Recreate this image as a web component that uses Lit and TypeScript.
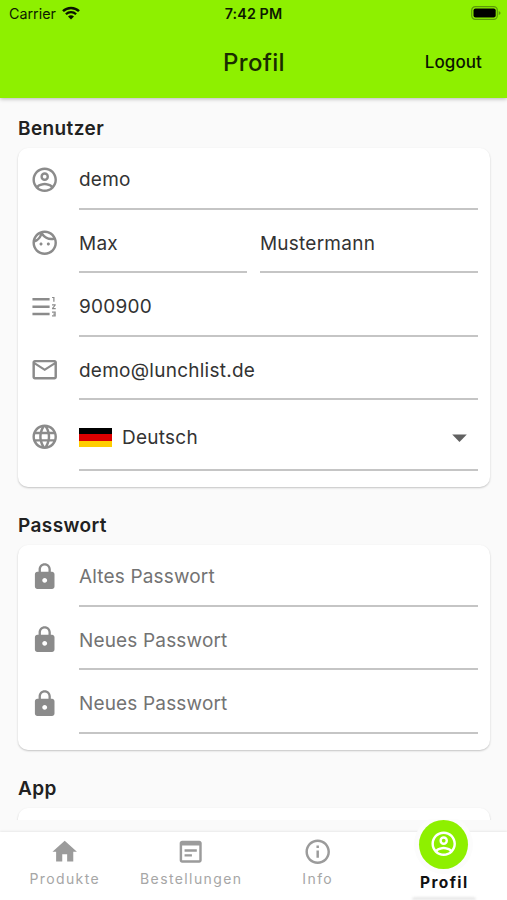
import { LitElement, html, css, svg } from "lit";
import { customElement, property } from "lit/decorators.js";

const ICONS: Record<string, string> = {
  account: "M12 2C6.48 2 2 6.48 2 12s4.48 10 10 10 10-4.48 10-10S17.52 2 12 2zM7.07 18.28c.43-.9 3.05-1.78 4.93-1.78s4.51.88 4.93 1.78C15.57 19.36 13.86 20 12 20s-3.57-.64-4.93-1.72zm11.29-1.45c-1.43-1.74-4.9-2.33-6.36-2.33s-4.93.59-6.36 2.33C4.62 15.49 4 13.82 4 12c0-4.41 3.59-8 8-8s8 3.59 8 8c0 1.82-.62 3.49-1.64 4.83zM12 6c-1.94 0-3.5 1.56-3.5 3.5S10.06 13 12 13s3.5-1.56 3.5-3.5S13.94 6 12 6zm0 5c-.83 0-1.5-.67-1.5-1.5S11.17 8 12 8s1.5.67 1.5 1.5S12.83 11 12 11z",
  face: "M10.25 13c0 .69-.56 1.25-1.25 1.25S7.75 13.69 7.75 13s.56-1.25 1.25-1.25 1.25.56 1.25 1.25zM15 11.75c-.69 0-1.25.56-1.25 1.25s.56 1.25 1.25 1.25 1.25-.56 1.25-1.25-.56-1.25-1.25-1.25zm7 .25c0 5.52-4.48 10-10 10S2 17.52 2 12 6.48 2 12 2s10 4.48 10 10zM10.66 4.12C12.06 6.44 14.6 8 17.5 8c.46 0 .91-.05 1.34-.12C17.44 5.56 14.9 4 12 4c-.46 0-.91.05-1.34.12zM4.42 9.47c1.71-.97 3.03-2.55 3.66-4.44C6.37 6 5.05 7.58 4.42 9.47zM20 12c0-.78-.12-1.53-.33-2.24-.7.15-1.42.24-2.17.24-3.13 0-5.92-1.44-7.76-3.69C8.69 8.87 6.6 10.88 4 11.86c.01.04 0 .09 0 .14 0 4.41 3.59 8 8 8s8-3.59 8-8z",
  numbers: "M18 17h2v.5h-1v1h1v.5h-2v1h3v-4h-3v1zm1-9h1V4h-2v1h1v3zm-1 3h1.8L18 13.1v.9h3v-1h-1.8l1.8-2.1V10h-3v1zM2 5h14v2H2V5zm0 14h14v-2H2v2zm0-6h14v-2H2v2z",
  mail: "M22 6c0-1.100-.9-2-2-2H4c-1.100 0-2 .9-2 2v12c0 1.100.9 2 2 2h16c1.100 0 2-.9 2-2V6zm-2 0l-8 5-8-5h16zm0 12H4V8l8 5 8-5v10z",
  globe: "M11.990 2C6.470 2 2 6.480 2 12s4.470 10 9.990 10C17.520 22 22 17.520 22 12S17.520 2 11.990 2zm6.930 6h-2.950c-.32-1.250-.78-2.450-1.380-3.560 1.840.63 3.370 1.910 4.330 3.560zM12 4.040c.83 1.200 1.480 2.530 1.910 3.960h-3.820c.43-1.430 1.080-2.760 1.910-3.960zM4.260 14C4.100 13.360 4 12.690 4 12s.1-1.360.26-2h3.380c-.08.66-.14 1.320-.14 2s.06 1.340.14 2H4.260zm.82 2h2.950c.32 1.250.78 2.450 1.380 3.560-1.840-.63-3.370-1.900-4.330-3.560zm2.950-8H5.080c.96-1.660 2.490-2.930 4.330-3.560C8.810 5.550 8.350 6.750 8.030 8zM12 19.960c-.83-1.200-1.480-2.530-1.910-3.960h3.820c-.43 1.430-1.080 2.760-1.910 3.960zM14.340 14H9.660c-.09-.66-.16-1.320-.16-2s.07-1.350.16-2h4.680c.09.65.16 1.320.16 2s-.07 1.340-.16 2zm.25 5.560c.6-1.110 1.060-2.310 1.380-3.560h2.950c-.96 1.650-2.490 2.930-4.330 3.560zM16.360 14c.08-.66.14-1.320.14-2s-.06-1.340-.14-2h3.380c.16.64.26 1.310.26 2s-.1 1.360-.26 2h-3.380z",
  lock: "M18 8h-1V6c0-2.760-2.240-5-5-5S7 3.240 7 6v2H6c-1.100 0-2 .9-2 2v10c0 1.100.9 2 2 2h12c1.100 0 2-.9 2-2V10c0-1.100-.9-2-2-2zm-6 9c-1.100 0-2-.9-2-2s.9-2 2-2 2 .9 2 2-.9 2-2 2zm3.100-9H8.900V6c0-1.710 1.390-3.100 3.100-3.100 1.710 0 3.100 1.390 3.100 3.100v2z",
  home: "M10 20v-6h4v6h5v-8h3L12 3 2 12h3v8z",
  orders: "M19 3H5c-1.110 0-2 .9-2 2v14c0 1.100.89 2 2 2h14c1.100 0 2-.9 2-2V5c0-1.100-.89-2-2-2zm0 16H5V7h14v12zm-2-7H7v-2h10v2zm-4 4H7v-2h6v2z",
  info: "M11 7h2v2h-2zm0 4h2v6h-2zm1-9C6.480 2 2 6.480 2 12s4.480 10 10 10 10-4.480 10-10S17.520 2 12 2zm0 18c-4.410 0-8-3.590-8-8s3.590-8 8-8 8 3.590 8 8-3.590 8-8 8z",
  down: "M7 10l5 5 5-5z",
};

@customElement("md-icon")
class MdIcon extends LitElement {
  @property() name = "";
  static styles = css`
    :host { display: block; width: 29.4px; height: 29.4px; flex: none; }
    svg { display: block; width: 100%; height: 100%; fill: currentColor; }
  `;
  render() {
    return html`<svg viewBox="0 0 24 24">${svg`<path d=${ICONS[this.name]}></path>`}</svg>`;
  }
}

@customElement("status-bar")
class StatusBar extends LitElement {
  static styles = css`
    :host { display: grid; grid-template-columns: 1fr auto 1fr; align-items: center; height: 27px; padding: 0 6px 0 9px; font-size: 14.3px; color: #0d1a00; }
    .left { display: flex; align-items: center; gap: 6px; letter-spacing: 0; }
    .time { font-weight: 600; letter-spacing: 0.1px; margin-right: 3px; }
    .wifi { width: 18px; height: 14px; display: block; margin-top: -2px; }
    .battery { width: 30px; height: 14px; display: block; justify-self: end; margin-top: -1px; }
  `;
  render() {
    return html`
      <div class="left">
        <span>Carrier</span>
        <svg class="wifi" viewBox="0 0 18 14">
          <path d="M1 5.200A11.500 11.500 0 0 1 17 5.200" fill="none" stroke="#0a1400" stroke-width="2.500"></path>
          <path d="M3.900 8.200A7.300 7.300 0 0 1 14.100 8.200" fill="none" stroke="#0a1400" stroke-width="2.300"></path>
          <path d="M9 13.600L6 10.600A4.300 4.300 0 0 1 12 10.600Z" fill="#0a1400"></path>
        </svg>
      </div>
      <span class="time">7:42 PM</span>
      <svg class="battery" viewBox="0 0 30 14">
        <rect x="0.700" y="0.700" width="25.600" height="12.600" rx="3.600" fill="none" stroke="#5c9a08" stroke-width="1.200"></rect>
        <rect x="2.500" y="2.500" width="22.200" height="9" rx="2" fill="#000"></rect>
        <path d="M27.700 4.900Q29.600 5.600 29.600 7T27.700 9.100Z" fill="#5c9a08"></path>
      </svg>`;
  }
}

@customElement("form-row")
class FormRow extends LitElement {
  @property() icon = "";
  @property({ type: Array }) values: string[] = [];
  @property({ type: Boolean }) hint = false;
  @property({ type: Boolean }) select = false;
  static styles = css`
    :host { display: flex; height: 63.6px; padding: 0 12.500px 0 12.300px; }
    :host([select]) { height: 70.500px; }
    md-icon { color: #8b8b8b; margin-top: 16.500px; margin-right: 19.300px; }
    :host([select]) md-icon { margin-top: 20px; }
    .fields { flex: 1; display: grid; gap: 12.400px; }
    .two { grid-template-columns: 168.500px 1fr; }
    .field { box-sizing: border-box; height: 61.500px; border-bottom: 2px solid #c5c5c5; padding-top: 4px; display: flex; align-items: center; color: #333; font-size: 19px; letter-spacing: 0.25px; }
    :host([select]) .field { height: 69px; padding-top: 3px; }
    :host([hint]) .field { color: #737373; letter-spacing: 0.16px; }
    .flag { width: 33px; height: 19.600px; margin-right: 10px; display: grid; }
    .black { background: #000; }
    .red { background: #d00; }
    .gold { background: #ffce00; }
    .field md-icon, :host([select]) .field md-icon { width: 35px; height: 35px; margin: 0 1px 0 auto; color: #616161; }
  `;
  render() {
    return html`
      <md-icon name=${this.icon}></md-icon>
      <div class="fields ${this.values.length > 1 ? "two" : ""}">
        ${this.values.map((v) => html`
          <div class="field">
            ${this.select ? html`<div class="flag"><i class="black"></i><i class="red"></i><i class="gold"></i></div>` : ""}
            <span>${v}</span>
            ${this.select ? html`<md-icon name="down"></md-icon>` : ""}
          </div>`)}
      </div>`;
  }
}

@customElement("nav-bar")
class NavBar extends LitElement {
  static styles = css`
    :host { position: relative; display: grid; grid-template-columns: repeat(4, 1fr); height: 68.500px; padding-left: 1px; flex: none; background: #fff; box-shadow: 0 -1px 2px rgba(0,0,0,.07); }
    .item { display: flex; flex-direction: column; align-items: center; padding-top: 5.500px; color: #9b9b9b; font-size: 14px; letter-spacing: 1.400px; }
    .item span { line-height: 18px; margin-top: 3.500px; padding-left: 1px; color: #a6a6a6; }
    .active { padding-top: 0; position: relative; }
    .item.active span { color: #111; font-weight: 700; font-size: 15.500px; margin-top: 5px; }
    .bubble { width: 49px; height: 49px; margin-top: -12px; border-radius: 50%; background: #8ef000; color: #fff; display: grid; place-items: center; box-shadow: 0 0 0 5px #fcfcfc; clip-path: inset(0 -6px -6px -6px); }
    .glow { position: absolute; bottom: 0; width: 64px; height: 3px; border-radius: 3px 3px 0 0; background: #e8e8e8; filter: blur(1px); }
  `;
  render() {
    return html`
      <div class="item"><md-icon name="home"></md-icon><span>Produkte</span></div>
      <div class="item"><md-icon name="orders"></md-icon><span>Bestellungen</span></div>
      <div class="item"><md-icon name="info"></md-icon><span>Info</span></div>
      <div class="item active"><div class="bubble"><md-icon name="account"></md-icon></div><span>Profil</span><div class="glow"></div></div>`;
  }
}

@customElement("app-root")
class AppRoot extends LitElement {
  static styles = css`
    :host { display: flex; flex-direction: column; height: 900px; overflow: hidden; background: #fafafa; font-family: Inter, "Liberation Sans", sans-serif; color: #212121; }
    header { height: 98px; flex: none; background: #8ef000; box-shadow: 0 1px 4px rgba(0,0,0,.28); position: relative; }
    .bar { display: grid; grid-template-columns: 1fr auto 1fr; align-items: center; height: 70px; padding: 0 25px 0 26px; }
    .title { grid-column: 2; font-size: 24px; font-weight: 500; letter-spacing: 0.3px; color: #1a2c00; }
    .logout { justify-self: end; font-size: 17px; font-weight: 500; letter-spacing: 0.1px; color: #0a1400; }
    main { height: 722px; flex: none; overflow: hidden; padding: 0 17px 0 18px; box-sizing: border-box; margin-bottom: 11.500px; }
    h2 { margin: 0; font-size: 19px; font-weight: 600; letter-spacing: 0.4px; line-height: 24px; padding: 19px 0 7px; }
    .card { background: #fff; border-radius: 10px; box-shadow: 0 1px 2px rgba(0,0,0,.22); box-sizing: border-box; }
    .user { height: 339px; margin-bottom: 8px; }
    .password { height: 204.500px; margin-bottom: 8px; }
    .app { height: 80px; }
  `;
  render() {
    return html`
      <header>
        <status-bar></status-bar>
        <div class="bar"><div class="title">Profil</div><div class="logout">Logout</div></div>
      </header>
      <main>
        <h2>Benutzer</h2>
        <section class="card user">
          <form-row icon="account" .values=${["demo"]}></form-row>
          <form-row icon="face" .values=${["Max", "Mustermann"]}></form-row>
          <form-row icon="numbers" .values=${["900900"]}></form-row>
          <form-row icon="mail" .values=${["demo@lunchlist.de"]}></form-row>
          <form-row icon="globe" select .values=${["Deutsch"]}></form-row>
        </section>
        <h2>Passwort</h2>
        <section class="card password">
          <form-row icon="lock" hint .values=${["Altes Passwort"]}></form-row>
          <form-row icon="lock" hint .values=${["Neues Passwort"]}></form-row>
          <form-row icon="lock" hint .values=${["Neues Passwort"]}></form-row>
        </section>
        <h2>App</h2>
        <section class="card app"></section>
      </main>
      <nav-bar></nav-bar>`;
  }
}
